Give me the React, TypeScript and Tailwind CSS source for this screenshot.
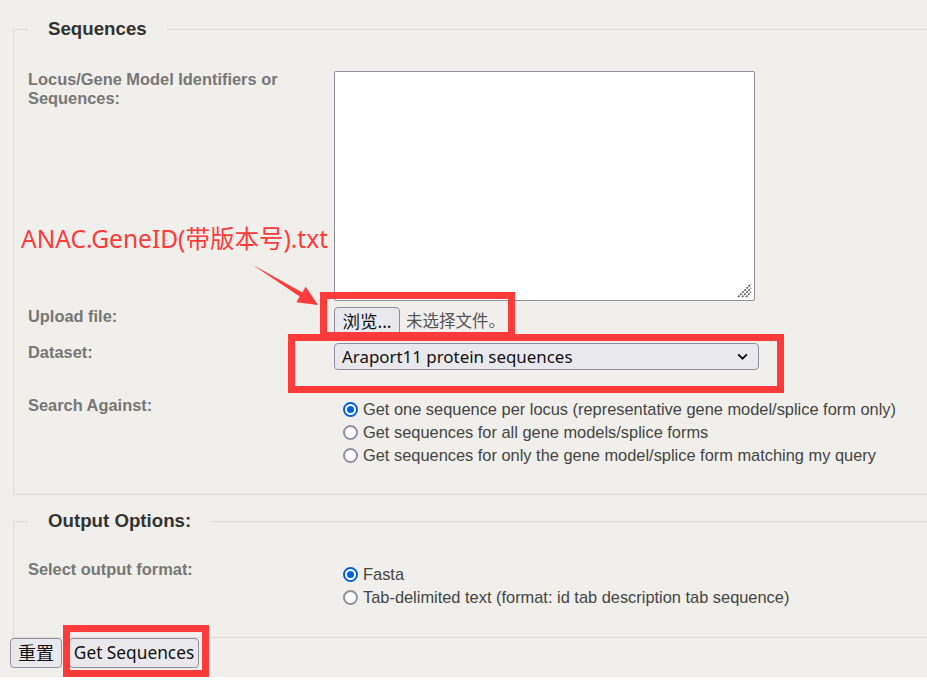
import React from 'react';

const labelCls = "w-[306px] shrink-0 text-[16.4px] leading-[19px] font-bold text-[#777]";
const cjk = "font-['Noto_Sans','Noto_Sans_CJK_SC',sans-serif]";

function Radio({ checked }: { checked?: boolean }) {
  if (checked) {
    return (
      <span className="w-[15px] h-[15px] rounded-full border-[2px] border-[#0060df] bg-white flex items-center justify-center shrink-0">
        <span className="w-[7px] h-[7px] rounded-full bg-[#0060df]" />
      </span>
    );
  }
  return <span className="w-[15px] h-[15px] rounded-full border-[2px] border-[#8f8f9d] bg-white shrink-0" />;
}

function RadioLine({ checked, children }: { checked?: boolean; children: React.ReactNode }) {
  return (
    <div className="flex items-center h-[23px] pl-[9px] gap-[5px] text-[16.4px] text-[#444]">
      <Radio checked={checked} />
      <span>{children}</span>
    </div>
  );
}

export default function App() {
  return (
    <div className="relative w-[927px] h-[683px] overflow-hidden bg-white font-['Liberation_Sans',Arial,sans-serif]">
      <div className="h-[677px] bg-[#f0efeb] pt-[18px]">
        {/* Sequences */}
        <fieldset className="ml-[13px] w-[980px] border border-[#dcdad6] pl-[14px] pt-[31px] pb-[27px]">
          <legend className="px-5 text-[18.7px] leading-[22px] font-bold text-[#333]">Sequences</legend>

          <div className="flex">
            <div className={`${labelCls} -mt-px`}>
              Locus/Gene Model Identifiers or<br />Sequences:
            </div>
            <div className="relative w-[421px] h-[230px] bg-white border border-[#8f8f9d] rounded-[2px]">
              <svg className="absolute right-[2px] bottom-[2px]" width="16" height="16" viewBox="0 0 16 16">
                <g stroke="#5e5e5e" strokeWidth="1.6" strokeDasharray="2 1">
                  <line x1="2" y1="15" x2="15" y2="2" />
                  <line x1="6" y1="15" x2="15" y2="6" />
                  <line x1="10" y1="15" x2="15" y2="10" />
                </g>
              </svg>
            </div>
          </div>

          <div className="flex mt-[6px]">
            <div className={labelCls}>Upload file:</div>
            <div className="flex items-center">
              <button className={`h-[29px] w-[66px] rounded-[4px] border border-[#8f8f9d] bg-[#e9e9ed] text-[17.5px] text-[#111] ${cjk}`}>
                浏览...
              </button>
              <span className={`ml-[6px] text-[16.5px] text-[#555] ${cjk}`}>未选择文件。</span>
            </div>
          </div>

          <div className="flex mt-[7px]">
            <div className={labelCls}>Dataset:</div>
            <div className={`w-[425px] h-[27px] rounded-[4px] border border-[#8f8f9d] bg-[#e9e9ed] flex items-center justify-between pl-[7px] pr-[9px] text-[16.9px] text-[#111] ${cjk}`}>
              <span>Araport11 protein sequences</span>
              <svg width="13" height="13" viewBox="0 0 12 12">
                <path d="M2 4l4 4 4-4" fill="none" stroke="#111" strokeWidth="1.8" />
              </svg>
            </div>
          </div>

          <div className="flex mt-[26px]">
            <div className={labelCls}>Search Against:</div>
            <div className="mt-[2px]">
              <RadioLine checked>Get one sequence per locus (representative gene model/splice form only)</RadioLine>
              <RadioLine>Get sequences for all gene models/splice forms</RadioLine>
              <RadioLine>Get sequences for only the gene model/splice form matching my query</RadioLine>
            </div>
          </div>
        </fieldset>

        {/* Output Options */}
        <fieldset className="mt-[15px] ml-[13px] w-[980px] border border-[#dcdad6] pl-[14px] pt-[28px] pb-[28px]">
          <legend className="px-5 text-[18.7px] leading-[22px] font-bold text-[#333]">Output Options:</legend>
          <div className="flex">
            <div className={labelCls}>Select output format:</div>
            <div className="mt-[3px]">
              <RadioLine checked>Fasta</RadioLine>
              <RadioLine>Tab-delimited text (format: id tab description tab sequence)</RadioLine>
            </div>
          </div>
        </fieldset>

        <div className="flex gap-[7px] pl-[10px]">
          <button className={`h-[30px] w-[52px] rounded-[4px] border border-[#8f8f9d] bg-[#e9e9ed] text-[18px] text-[#111] ${cjk}`}>
            重置
          </button>
          <button className={`h-[30px] w-[130px] rounded-[4px] border border-[#8f8f9d] bg-[#e9e9ed] text-[17.3px] text-[#111] ${cjk}`}>
            Get Sequences
          </button>
        </div>
      </div>

      {/* annotations */}
      <div className={`absolute left-[21px] top-[223px] text-[24.5px] leading-[32px] text-[#fe3b3b] ${cjk}`}>
        ANAC.GeneID(带版本号).txt
      </div>
      <svg className="absolute left-0 top-0 pointer-events-none" width="927" height="683">
        <polygon
          points="253,265 302.3,292.4 305.7,286.8 318,305 296.3,302.2 299.7,296.6"
          fill="#fe3b3b"
        />
      </svg>
      <div className="absolute left-[320px] top-[292px] w-[195px] h-[47px] border-[7px] border-[#fe3b3b]" />
      <div className="absolute left-[288px] top-[334px] w-[496px] h-[59px] border-[7px] border-[#fe3b3b]" />
      <div className="absolute left-[63px] top-[625px] w-[146px] h-[52px] border-[7px] border-[#fe3b3b]" />
    </div>
  );
}
